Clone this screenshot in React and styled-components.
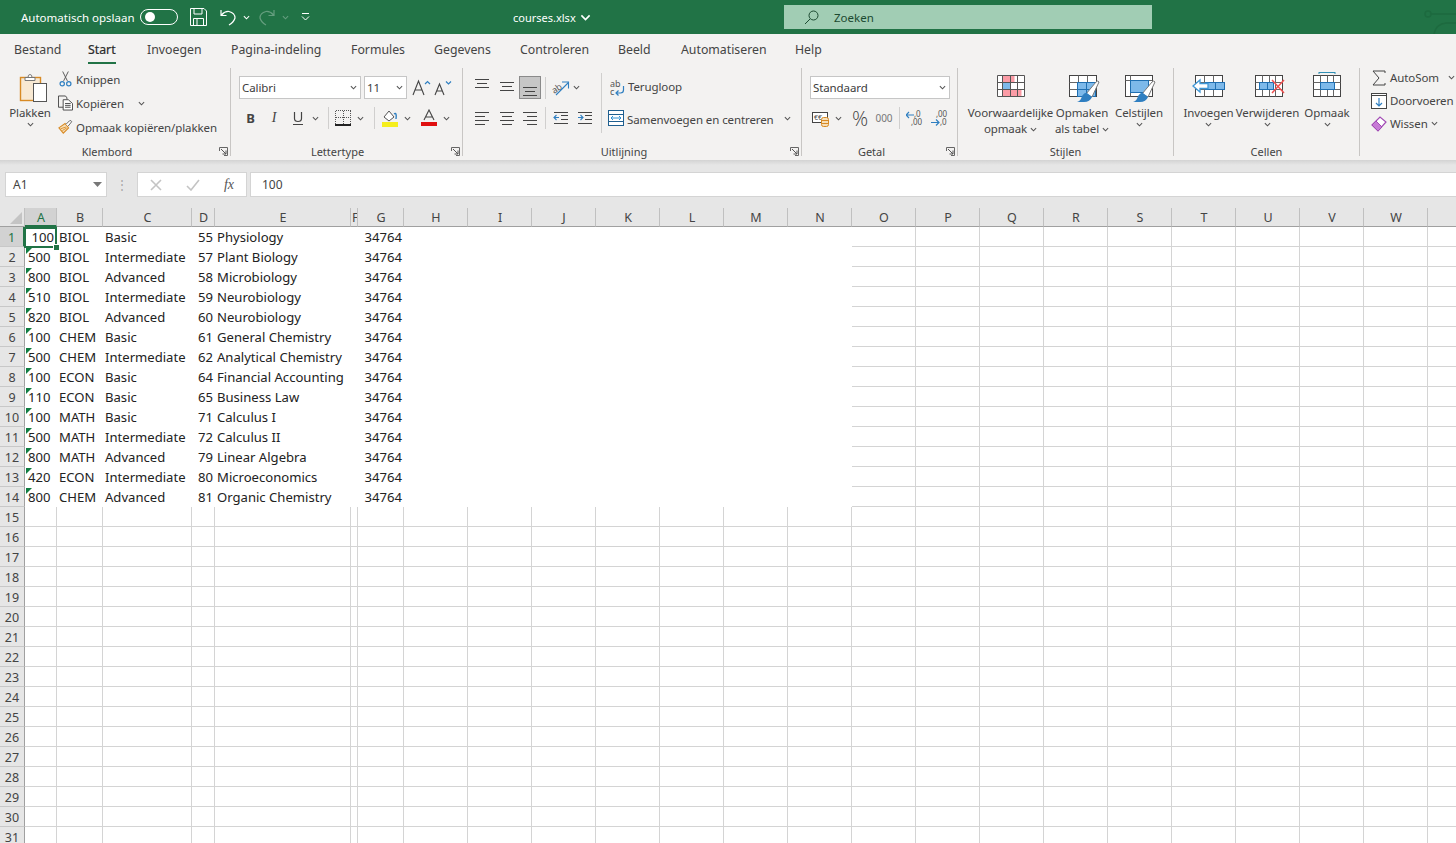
import React from 'react';
import styled, { createGlobalStyle } from 'styled-components';

const UI_FONT = `"Noto Sans", "Open Sans", sans-serif`;

const GlobalStyle = createGlobalStyle`
  html, body { margin: 0; padding: 0; height: 100%; overflow: hidden; background: #fff; }
  body { font-family: ${UI_FONT}; }
`;

const Page = styled.div`
  width: 1456px;
  height: 843px;
  overflow: hidden;
  display: flex;
  flex-direction: column;
`;

/* ---------- title bar ---------- */

const TitleBar = styled.header`
  height: 34px;
  flex: none;
  background: #217346;
  color: #fff;
  display: flex;
  align-items: center;
  padding-left: 21px;
  font-size: 11.5px;
  overflow: hidden;
`;

const Slot = styled.div`
  width: ${p => p.$w}px;
  flex: none;
  display: flex;
  align-items: center;
  white-space: nowrap;
  font-size: ${p => p.$fs ? `${p.$fs}px` : 'inherit'};
  opacity: ${p => p.$dim ? 0.3 : 1};
`;

const Toggle = styled.div`
  width: 38px;
  height: 16px;
  box-sizing: border-box;
  border: 1px solid #fff;
  border-radius: 8px;
  padding: 2px 0 0 4px;

  &::before {
    content: '';
    display: block;
    width: 10px;
    height: 10px;
    border-radius: 50%;
    background: #fff;
  }
`;

const SearchBox = styled.div`
  width: 368px;
  height: 24px;
  flex: none;
  background: #a1cdb4;
  color: #1c4a31;
  display: flex;
  align-items: center;
  gap: 15px;
  padding-left: 20px;
  box-sizing: border-box;
`;

const TitleArt = styled.svg`
  margin-left: auto;
  flex: none;
`;

/* ---------- tabs ---------- */

const TabBar = styled.nav`
  height: 34px;
  flex: none;
  background: #f3f2f1;
  display: flex;
  padding-left: 14px;
  box-sizing: border-box;
`;

const Tab = styled.div`
  width: ${p => p.$w}px;
  flex: none;
  font-size: 12.3px;
  line-height: 31px;
  color: ${p => p.$active ? '#2b2b2b' : '#444'};
  -webkit-text-stroke: ${p => p.$active ? '0.2px #2b2b2b' : '0'};

  span {
    display: inline-block;
    height: 28px;
    border-bottom: ${p => p.$active ? '2px solid #217346' : '0'};
  }
`;

/* ---------- ribbon ---------- */

const Ribbon = styled.div`
  height: 92px;
  flex: none;
  background: #f3f2f1;
  display: flex;
  color: #444;
  font-size: 11.5px;
  letter-spacing: -0.1px;
`;

const Group = styled.section`
  position: relative;
  width: ${p => p.$w ? `${p.$w}px` : 'auto'};
  flex: ${p => p.$w ? 'none' : 1};
  box-sizing: border-box;
  display: flex;
  flex-direction: column;
  height: 92px;
  padding-bottom: 1px;
  overflow: hidden;

  &::after {
    content: '';
    display: ${p => p.$w ? 'block' : 'none'};
    position: absolute;
    right: 0;
    top: 0;
    width: 1px;
    height: 88px;
    background: #c8c6c4;
  }
`;

const GroupBody = styled.div`
  flex: 1;
  min-height: 0;
  display: flex;
  padding: ${p => p.$top || 0}px 0 0 ${p => p.$left || 0}px;
  flex-direction: ${p => p.$col ? 'column' : 'row'};
`;

const GroupFooter = styled.footer`
  height: 16px;
  flex: none;
  display: grid;
  grid-template-columns: 1fr auto 1fr;
  align-items: center;
  font-size: 11px;
  letter-spacing: 0;
  color: #444;
  padding-right: 3px;
`;

const FooterLabel = styled.span`
  grid-column: 2;
  transform: translateX(${p => p.$shift || 0}px);
`;

const Launcher = styled.span`
  grid-column: 3;
  justify-self: end;
  display: flex;
`;

const BigBtn = styled.div`
  width: ${p => p.$w}px;
  flex: none;
  display: flex;
  flex-direction: column;
  align-items: center;
  padding-top: 4px;
  line-height: 16px;
  white-space: nowrap;
  text-align: center;

  svg.big { height: 33px; display: block; flex: none; }
`;

const SmallStack = styled.div`
  display: flex;
  flex-direction: column;
  margin-left: ${p => p.$ml || 0}px;
  margin-top: ${p => p.$mt || 0}px;
`;

const SmallRow = styled.div`
  height: ${p => p.$h || 24}px;
  flex: none;
  display: flex;
  align-items: center;
  gap: 3px;
  white-space: nowrap;
`;

const ToolRow = styled.div`
  height: ${p => p.$h || 23}px;
  flex: none;
  display: flex;
  align-items: center;
  margin-top: ${p => p.$mt || 0}px;
`;

const Tool = styled.div`
  width: ${p => p.$w}px;
  height: ${p => p.$h ? `${p.$h}px` : 'auto'};
  box-sizing: border-box;
  flex: none;
  display: flex;
  align-items: center;
  justify-content: center;
  white-space: nowrap;
  background: ${p => p.$on ? '#c6c6c6' : 'transparent'};
  border: ${p => p.$on ? '1px solid #8a8a8a' : '0'};
`;

const Percent = styled(Tool)`
  font-family: "Open Sans", sans-serif;
  font-weight: 300;
  font-size: 20px;
  letter-spacing: 0;
`;

const Thousands = styled(Tool)`
  font-size: 10px;
  color: #777;
`;

const BoldMark = styled.b`
  font-size: 13px;
`;

const ItalicMark = styled.i`
  font-size: 14px;
  font-family: "Liberation Serif", serif;
`;

const ToolSep = styled.div`
  width: 1px;
  height: ${p => p.$h || 22}px;
  background: #d0cfce;
  flex: none;
  margin-left: ${p => p.$l || 0}px;
  margin-right: ${p => p.$r || 0}px;
`;

const Spacer = styled.span`
  width: ${p => p.$w}px;
  flex: none;
  display: block;
`;

const Select = styled.div`
  width: ${p => p.$w}px;
  height: 23px;
  box-sizing: border-box;
  flex: none;
  margin-right: ${p => p.$mr || 0}px;
  background: #fff;
  border: 1px solid #c6c6c6;
  display: flex;
  align-items: center;
  justify-content: space-between;
  padding: 0 3px 1px 2px;
  color: #3c3c3c;
`;

const WithText = styled.div`
  display: flex;
  align-items: center;
  gap: ${p => p.$gap || 3}px;
  white-space: nowrap;

  span {
    padding-top: ${p => p.$low ? 2 : 0}px;
    padding-bottom: ${p => p.$high ? 2 : 0}px;
  }
`;

const ColumnStack = styled.div`
  display: flex;
  flex-direction: column;
`;

/* ---------- formula bar ---------- */

const FormulaArea = styled.div`
  height: 48px;
  flex: none;
  box-sizing: border-box;
  background: linear-gradient(#d3d3d3 0, #e6e6e6 5px);
  padding: 12px 0 0 5px;
  display: flex;
  align-items: flex-start;
  color: #444;
  font-size: 12px;
`;

const FieldBox = styled.div`
  width: ${p => p.$w ? `${p.$w}px` : 'auto'};
  flex: ${p => p.$w ? 'none' : 1};
  height: 25px;
  box-sizing: border-box;
  background: #fff;
  border: 1px solid #d4d4d4;
  display: flex;
  align-items: center;
  margin-left: ${p => p.$ml || 0}px;
  padding-left: ${p => p.$pl || 0}px;
  padding-right: ${p => p.$pr || 0}px;
  justify-content: ${p => p.$between ? 'space-between' : 'flex-start'};
  border-right: ${p => p.$open ? 0 : '1px solid #d4d4d4'};
`;

const FxMark = styled.i`
  font-family: "Liberation Serif", serif;
  font-size: 14px;
  color: #555;
`;

const Grip = styled.div`
  width: 30px;
  flex: none;
  height: 25px;
  display: flex;
  align-items: center;
  justify-content: center;
  color: #a6a6a6;
`;

/* ---------- sheet ---------- */

const COLS = [
  ['A', 32], ['B', 46], ['C', 89], ['D', 23], ['E', 136], ['F', 7], ['G', 46],
  ['H', 64], ['I', 64], ['J', 64], ['K', 64], ['L', 64], ['M', 64], ['N', 64],
  ['O', 64], ['P', 64], ['Q', 64], ['R', 64], ['S', 64], ['T', 64], ['U', 64],
  ['V', 64], ['W', 64], ['X', 64],
];

const Sheet = styled.div`
  flex: 1;
  overflow: hidden;
  background: #fff;
  display: grid;
  grid-template-columns: 25px ${COLS.map(c => c[1] + 'px').join(' ')};
  grid-auto-rows: 20px;
  grid-template-rows: 19px;
  font-family: "Noto Sans", sans-serif;
  font-size: 13.1px;
  color: #222;
`;

const Corner = styled.div`
  position: relative;
  background: #e6e6e6;
  border-bottom: 1px solid #a0a0a0;
  border-right: 1px solid #c0c0c0;
  box-sizing: border-box;

  &::after {
    content: '';
    position: absolute;
    right: 2px;
    bottom: 2px;
    border-left: 12px solid transparent;
    border-bottom: 12px solid #c4c4c4;
  }
`;

const ColHead = styled.div`
  box-sizing: border-box;
  background: ${p => p.$on ? '#d2d2d2' : '#e6e6e6'};
  color: ${p => p.$on ? '#217346' : '#444'};
  border-right: 1px solid #c0c0c0;
  border-bottom: ${p => p.$on ? '2px solid #217346' : '1px solid #a0a0a0'};
  font-size: 12.5px;
  line-height: 19px;
  padding-left: 1px;
  text-align: center;
  overflow: hidden;
`;

const RowHead = styled.div`
  box-sizing: border-box;
  background: ${p => p.$on ? '#d2d2d2' : '#e6e6e6'};
  color: ${p => p.$on ? '#217346' : '#444'};
  border-right: ${p => p.$on ? '2px solid #217346' : '1px solid #a0a0a0'};
  border-bottom: 1px solid #c8c8c8;
  font-size: 12.5px;
  line-height: 21px;
  text-align: center;
`;

const Cell = styled.div`
  position: relative;
  box-sizing: border-box;
  padding: 0 2px 0 ${p => p.$first ? 3 : 2}px;
  line-height: 20px;
  white-space: nowrap;
  text-align: ${p => p.$right ? 'right' : 'left'};
  border-right: ${p => p.$plain ? 0 : '1px solid #d4d4d4'};
  border-bottom: ${p => p.$plain ? 0 : '1px solid #d4d4d4'};

  ${p => p.$flag && `
    &::before {
      content: '';
      position: absolute;
      left: 1px;
      top: 1px;
      border-top: 6px solid #107c41;
      border-right: 6px solid transparent;
    }
  `}

  ${p => p.$selected && `
    box-shadow: 0 0 0 2px #217346 inset;
    margin: 0 0 -1px -1px;
    padding-right: 3px;

    &::after {
      content: '';
      position: absolute;
      right: -3px;
      bottom: -3px;
      width: 5px;
      height: 5px;
      background: #217346;
      border: 1px solid #fff;
      z-index: 2;
    }
  `}
`;

const ROWS = [
  ['100', 'BIOL', 'Basic', '55', 'Physiology'],
  ['500', 'BIOL', 'Intermediate', '57', 'Plant Biology'],
  ['800', 'BIOL', 'Advanced', '58', 'Microbiology'],
  ['510', 'BIOL', 'Intermediate', '59', 'Neurobiology'],
  ['820', 'BIOL', 'Advanced', '60', 'Neurobiology'],
  ['100', 'CHEM', 'Basic', '61', 'General Chemistry'],
  ['500', 'CHEM', 'Intermediate', '62', 'Analytical Chemistry'],
  ['100', 'ECON', 'Basic', '64', 'Financial Accounting'],
  ['110', 'ECON', 'Basic', '65', 'Business Law'],
  ['100', 'MATH', 'Basic', '71', 'Calculus I'],
  ['500', 'MATH', 'Intermediate', '72', 'Calculus II'],
  ['800', 'MATH', 'Advanced', '79', 'Linear Algebra'],
  ['420', 'ECON', 'Intermediate', '80', 'Microeconomics'],
  ['800', 'CHEM', 'Advanced', '81', 'Organic Chemistry'],
];

/* ---------- icons ---------- */

const Chev = ({ c = '#555', s = 7 }) => (
  <svg width={s} height={s} viewBox="0 0 8 8" style={{ flex: 'none' }}>
    <path d="M1 2.5 L4 5.5 L7 2.5" fill="none" stroke={c} strokeWidth="1.2" />
  </svg>
);

const LauncherIcon = () => (
  <svg width="9" height="9" viewBox="0 0 9 9">
    <path d="M.5 4V.5H8.5V8.5H5" fill="none" stroke="#666" />
    <path d="M2 2 L7 7 M7 3.5V7H3.5" fill="none" stroke="#555" />
  </svg>
);

const Lines = ({ rows, w = 16 }) => (
  <svg width={w} height="17" viewBox="0 0 16 17">
    {rows.map(([x1, x2, y], i) => (
      <path key={i} d={`M${x1} ${y}.5H${x2}`} stroke="#444" />
    ))}
  </svg>
);

const TableGrid = ({ x = 0, y = 3, w = 28, h = 22, cols = 3, rows = 3 }) => {
  const parts = [];
  for (let i = 1; i < cols; i++) parts.push(`M${x + Math.round((w * i) / cols)} ${y}v${h}`);
  for (let i = 1; i < rows; i++) parts.push(`M${x} ${y + Math.round((h * i) / rows)}h${w}`);
  return (
    <g>
      <rect x={x + 0.5} y={y + 0.5} width={w} height={h} fill="#fff" stroke="#444" />
      <path d={parts.join('')} stroke="#666" fill="none" transform="translate(.5 .5)" />
    </g>
  );
};

const Brush = ({ x = 0 }) => (
  <g transform={`translate(${x} 0)`}>
    <path d="M21 22 L31 10 Q33 8 34 10 L27 25 Z" fill="#fff" stroke="#777" />
    <path d="M12 30 Q16 29 17 24 Q20 20 22 21 L27 25 Q25 30 19 30 Z" fill="#2f7fc1" />
  </g>
);

const PasteIcon = () => (
  <svg className="big" width="34" height="33" viewBox="0 0 34 33">
    <rect x="7.5" y="5.5" width="20" height="23" fill="#f8e9d3" stroke="#d88a24" strokeWidth="1.4" />
    <path d="M12 5.5h10v3H12z M15 5.5q0-3 2-3t2 3" fill="#fff" stroke="#777" />
    <rect x="20.5" y="11.5" width="13" height="18" fill="#fff" stroke="#555" />
  </svg>
);

const Scissors = () => (
  <svg width="16" height="18" viewBox="0 0 16 18">
    <path d="M5 1 L10 11 M11 1 L6 11" stroke="#555" fill="none" />
    <circle cx="4.5" cy="14" r="2.3" fill="none" stroke="#2f7fc1" strokeWidth="1.3" />
    <circle cx="11.5" cy="14" r="2.3" fill="none" stroke="#2f7fc1" strokeWidth="1.3" />
  </svg>
);

const CopyIcon = () => (
  <svg width="16" height="16" viewBox="0 0 16 16">
    <path d="M6.5 12.5H.5V.5H8L9.5 2.5V4" fill="none" stroke="#444" />
    <path d="M5.5 4.5H11L15.5 8.5V15.5H5.5Z M7.5 8.5h6 M7.5 10.5h6 M7.5 12.5h6" fill="#fff" stroke="#444" />
  </svg>
);

const PainterIcon = () => (
  <svg width="17" height="16" viewBox="0 0 17 16">
    <path d="M1 9 L8 4 L12 9 L6 15 Z" fill="#f6dfb9" stroke="#d88a24" strokeWidth="1.2" />
    <path d="M3 10 L9 8 M5 12 L10 9" stroke="#d88a24" />
    <path d="M9 5 L13 1 Q15 0 15.5 2 L11.5 7" fill="#fff" stroke="#555" />
  </svg>
);

const GrowFont = ({ up, size }) => (
  <svg width="19" height="18" viewBox="0 0 19 18">
    <path d={size === 'big' ? 'M1 16 L6.5 2 L12 16 M3 11h7' : 'M2 16 L6.5 5 L11 16 M3.6 12h6'} fill="none" stroke="#444" strokeWidth="1.1" />
    <path d={up ? 'M13 5 L15.5 2.5 L18 5' : 'M13 2.5 L15.5 5 L18 2.5'} fill="none" stroke="#2f7fc1" strokeWidth="1.2" />
  </svg>
);

const Underlined = () => (
  <svg width="12" height="16" viewBox="0 0 12 16">
    <path d="M2.5 2v6.5q0 3 3.5 3t3.5-3V2" fill="none" stroke="#444" strokeWidth="1.2" />
    <path d="M1 14.5h10" stroke="#444" />
  </svg>
);

const BorderIcon = () => (
  <svg width="16" height="16" viewBox="0 0 16 16" shapeRendering="crispEdges">
    <path d="M.5 .5h15M.5 .5v14M15.5 .5v14M8.5 .5v14M.5 7.5h15" stroke="#555" strokeDasharray="1 1" fill="none" />
    <path d="M0 15h16" stroke="#222" strokeWidth="1.5" />
  </svg>
);

const FillIcon = () => (
  <svg width="16" height="18" viewBox="0 0 16 18">
    <path d="M2 8 L7 2 L12 8 L7 12 Z" fill="#fff" stroke="#555" />
    <path d="M12 5 Q15 3 14 10" fill="none" stroke="#2f7fc1" strokeWidth="1.4" />
    <rect x="0" y="13" width="16" height="5" fill="#f5ee1d" />
  </svg>
);

const FontColorIcon = () => (
  <svg width="16" height="18" viewBox="0 0 16 18">
    <path d="M3 11 L8 1 L13 11 M4.6 8h6.8" fill="none" stroke="#444" strokeWidth="1.1" />
    <rect x="0" y="13" width="16" height="4" fill="#e01010" />
  </svg>
);

const OrientIcon = () => (
  <svg width="18" height="18" viewBox="0 0 18 18">
    <text x="0" y="12" fontSize="9" fill="#555" transform="rotate(-35 6 10)" fontFamily="Noto Sans, sans-serif">ab</text>
    <path d="M4 16 L16 4 M10 3h6.5v6.5" fill="none" stroke="#2f7fc1" strokeWidth="1.1" />
  </svg>
);

const WrapIcon = () => (
  <svg width="15" height="18" viewBox="0 0 15 18">
    <text x="0" y="8" fontSize="9" fill="#555" fontFamily="Noto Sans, sans-serif">ab</text>
    <text x="0" y="16" fontSize="9" fill="#555" fontFamily="Noto Sans, sans-serif">c</text>
    <path d="M13.5 7v4q0 3-3 3H6 M8.5 11.5 L6 14 L8.5 16.5" fill="none" stroke="#2f7fc1" strokeWidth="1.2" />
  </svg>
);

const IndentIcon = ({ inward }) => (
  <svg width="16" height="14" viewBox="0 0 16 14">
    <path d="M1 1.5h14M8 4.5h7M8 8.5h7M1 12.5h14" stroke="#444" />
    <path d={inward ? 'M1 6.5h5M3.5 4 L6 6.5 L3.5 9' : 'M1 6.5h5M3.5 4 L1 6.5 L3.5 9'} fill="none" stroke="#2f7fc1" strokeWidth="1.1" />
  </svg>
);

const MergeIcon = () => (
  <svg width="16" height="16" viewBox="0 0 16 16">
    <rect x=".5" y=".5" width="15" height="15" fill="#fff" stroke="#1f5f8f" />
    <path d="M1 4.5h14M1 11.5h14" stroke="#1f5f8f" />
    <path d="M3 8h10M5 6 L3 8 L5 10 M11 6 L13 8 L11 10" fill="none" stroke="#2f8fd1" />
  </svg>
);

const CurrencyIcon = () => (
  <svg width="18" height="17" viewBox="0 0 18 17">
    <rect x=".5" y="2.5" width="15" height="10" fill="#fff" stroke="#444" />
    <text x="2" y="10" fontSize="7" fill="#444" fontFamily="Noto Sans, sans-serif">€€</text>
    <rect x="9.5" y="7.5" width="7" height="9" rx="2" fill="#f6dfb9" stroke="#d88a24" />
    <path d="M9.5 10.5h7M9.5 13.5h7" stroke="#d88a24" />
  </svg>
);

const DecimalIcon = ({ more }) => (
  <svg width="18" height="17" viewBox="0 0 18 17">
    <text x={more ? 5 : 8} y="7" fontSize="8" fill="#555" fontFamily="Noto Sans, sans-serif">{more ? ',00' : ',0'}</text>
    <text x={more ? 9 : 5} y="15" fontSize="8" fill="#555" fontFamily="Noto Sans, sans-serif">{more ? ',0' : ',00'}</text>
    {more
      ? <path d="M0 12.5h8M5 9.5 L8 12.5 L5 15.5" fill="none" stroke="#2f7fc1" strokeWidth="1.2" />
      : <path d="M0 5h8M3 2 L0 5 L3 8" fill="none" stroke="#2f7fc1" strokeWidth="1.2" />}
  </svg>
);

const CondIcon = () => (
  <svg className="big" width="32" height="33" viewBox="0 0 32 33">
    <rect x="2.5" y="3.5" width="27" height="21" fill="#fff" />
    <rect x="7.5" y="3.5" width="12" height="7" fill="#fb9ca6" />
    <rect x="7.5" y="10.5" width="8" height="7" fill="#7db9ea" />
    <rect x="7.5" y="17.5" width="19" height="7" fill="#fb9ca6" />
    <path d="M2.5 3.5h27v21h-27z M7.5 3v21 M15.5 3v21 M22.5 3v21 M2 10.5h27 M2 17.5h27" fill="none" stroke="#555" />
  </svg>
);

const TableStyleIcon = () => (
  <svg className="big" width="36" height="33" viewBox="0 0 36 33">
    <TableGrid x={5} y={3} w={27} h={21} cols={3} />
    <rect x="13.5" y="10.5" width="18" height="14" fill="#7db9ea" stroke="#1f6fb2" />
    <path d="M22.5 10v14M13 17.5h18" stroke="#1f6fb2" />
    <Brush x={1} />
  </svg>
);

const CellStyleIcon = () => (
  <svg className="big" width="36" height="33" viewBox="0 0 36 33">
    <rect x="4.5" y="3.5" width="27" height="21" fill="#fff" stroke="#444" />
    <path d="M4.5 8.5h27M9.5 3.5v21" stroke="#666" />
    <rect x="9.5" y="8.5" width="18" height="12" fill="#7db9ea" stroke="#1f6fb2" />
    <Brush x={0} />
  </svg>
);

const InsertIcon = () => (
  <svg className="big" width="36" height="33" viewBox="0 0 36 33">
    <TableGrid x={4} y={3} w={27} h={21} cols={3} />
    <rect x="14.5" y="10.5" width="19" height="7" fill="#7db9ea" stroke="#1f6fb2" />
    <path d="M24.5 10v8" stroke="#1f6fb2" />
    <path d="M2 14 L9 8 V11.5 H17 V16.5 H9 V20 Z" fill="#fff" stroke="#3f97d6" strokeWidth="1.3" />
  </svg>
);

const DeleteIcon = () => (
  <svg className="big" width="36" height="33" viewBox="0 0 36 33">
    <TableGrid x={5} y={3} w={27} h={21} cols={4} />
    <rect x="9.5" y="10.5" width="14" height="7" fill="#7db9ea" stroke="#1f6fb2" />
    <path d="M17.5 10v8" stroke="#1f6fb2" />
    <path d="M22 8 L34 21 M34 8 L22 21" stroke="#f05050" strokeWidth="1.5" />
  </svg>
);

const FormatIcon = () => (
  <svg className="big" width="32" height="33" viewBox="0 0 32 33">
    <path d="M8 .5h16M8 0v2M24 0v2" stroke="#2f8fb5" />
    <TableGrid x={2} y={3} w={27} h={21} cols={4} />
    <rect x="9.5" y="10.5" width="14" height="7" fill="#7db9ea" stroke="#1f6fb2" />
  </svg>
);

const Sigma = () => (
  <svg width="14" height="16" viewBox="0 0 14 16">
    <path d="M13 3V1H1L7 8L1 15H13V13" fill="none" stroke="#444" />
  </svg>
);

const FillDown = () => (
  <svg width="16" height="16" viewBox="0 0 16 16">
    <rect x=".5" y=".5" width="15" height="15" fill="#fff" stroke="#444" />
    <path d="M1 2.5h14" stroke="#444" />
    <path d="M8 5v8M5 10 L8 13 L11 10" fill="none" stroke="#2f7fc1" strokeWidth="1.2" />
  </svg>
);

const Eraser = () => (
  <svg width="16" height="16" viewBox="0 0 16 16">
    <path d="M1 9 L9 1 L15 6 L7 15 Z" fill="#fff" stroke="#a24cb5" strokeWidth="1.2" />
    <path d="M1 9 L5 5 L11 11 L7 15 Z" fill="#c77bd6" stroke="#a24cb5" />
  </svg>
);

const Footer = ({ label, launcher, shift }) => (
  <GroupFooter>
    <FooterLabel $shift={shift}>{label}</FooterLabel>
    {launcher && <Launcher><LauncherIcon /></Launcher>}
  </GroupFooter>
);

const TABS = [
  ['Bestand', 74], ['Start', 59], ['Invoegen', 84], ['Pagina-indeling', 120],
  ['Formules', 83], ['Gegevens', 86], ['Controleren', 98], ['Beeld', 63],
  ['Automatiseren', 114], ['Help', 50],
];

const App = () => (
  <Page>
    <GlobalStyle />
    <TitleBar>
      <Slot $w={119}>Automatisch opslaan</Slot>
      <Slot $w={50}><Toggle /></Slot>
      <Slot $w={30}>
        <svg width="17" height="18" viewBox="0 0 17 18">
          <path d="M.5 .5H14L16.5 3V17.5H.5Z M4 .5V6H12V.5 M3.5 17.5V10.5H13.5V17.5 M7 10.5V17.5" fill="none" stroke="#fff" />
        </svg>
      </Slot>
      <Slot $w={39}>
        <svg width="16" height="17" viewBox="0 0 16 17">
          <path d="M1 1V6.5H6.5 M1.5 6Q5 2 9 2.5Q15 4 15 9Q14 13 9 16" fill="none" stroke="#fff" strokeWidth="1.2" />
        </svg>
        <Spacer $w={7} />
        <Chev c="#fff" />
      </Slot>
      <Slot $w={42} $dim>
        <svg width="16" height="17" viewBox="0 0 16 17">
          <path d="M15 1V6.5H9.5 M14.5 6Q11 2 7 2.5Q1 4 1 9Q2 13 7 16" fill="none" stroke="#fff" strokeWidth="1.2" />
        </svg>
        <Spacer $w={7} />
        <Chev c="#fff" />
      </Slot>
      <Slot $w={212}>
        <svg width="9" height="9" viewBox="0 0 9 9">
          <path d="M1 .5h7M1 3.5 L4.5 7 L8 3.5" fill="none" stroke="#fff" />
        </svg>
      </Slot>
      <Slot $w={271} $fs={11}>
        <span>courses.xlsx</span>
        <Spacer $w={4} />
        <Chev c="#fff" s={11} />
      </Slot>
      <SearchBox>
        <svg width="15" height="15" viewBox="0 0 15 15">
          <circle cx="9.5" cy="5.5" r="4.5" fill="none" stroke="#1c4a31" />
          <path d="M6 9 L1 14" stroke="#1c4a31" />
        </svg>
        <span>Zoeken</span>
      </SearchBox>
      <TitleArt width="32" height="34" viewBox="0 0 32 34">
        <circle cx="4" cy="14" r="3" fill="none" stroke="#1d6a3f" strokeWidth="1.5" />
        <path d="M7 14H32 M10 34Q12 24 22 23H32" fill="none" stroke="#1d6a3f" strokeWidth="1.5" />
      </TitleArt>
    </TitleBar>

    <TabBar>
      {TABS.map(([name, w]) => (
        <Tab key={name} $w={w} $active={name === 'Start'}><span>{name}</span></Tab>
      ))}
    </TabBar>

    <Ribbon>
      <Group $w={231}>
        <GroupBody $left={4}>
          <BigBtn $w={52}>
            <PasteIcon />
            <span>Plakken</span>
            <Chev />
          </BigBtn>
          <SmallStack $ml={2} $mt={-1}>
            <SmallRow><Tool $w={15}><Scissors /></Tool><span>Knippen</span></SmallRow>
            <SmallRow><Tool $w={15}><CopyIcon /></Tool><span>Kopiëren</span><Spacer $w={8} /><Chev /></SmallRow>
            <SmallRow><Tool $w={15}><PainterIcon /></Tool><span>Opmaak kopiëren/plakken</span></SmallRow>
          </SmallStack>
        </GroupBody>
        <Footer label="Klembord" launcher shift={-7} />
      </Group>

      <Group $w={232}>
        <GroupBody $col $left={8} $top={8}>
          <ToolRow>
            <Select $w={122} $mr={3}>Calibri<Chev /></Select>
            <Select $w={43} $mr={4}>11<Chev /></Select>
            <Tool $w={20}><GrowFont up size="big" /></Tool>
            <Tool $w={22}><GrowFont size="small" /></Tool>
          </ToolRow>
          <ToolRow $mt={8} $h={22}>
            <Tool $w={23}><BoldMark>B</BoldMark></Tool>
            <Tool $w={24}><ItalicMark>I</ItalicMark></Tool>
            <Tool $w={24}><Underlined /></Tool>
            <Tool $w={11}><Chev /></Tool>
            <ToolSep $l={7} $r={6} />
            <Tool $w={16}><BorderIcon /></Tool>
            <Tool $w={18}><Chev /></Tool>
            <ToolSep $l={5} $r={7} />
            <Tool $w={16}><FillIcon /></Tool>
            <Tool $w={18}><Chev /></Tool>
            <Tool $w={26}><FontColorIcon /></Tool>
            <Tool $w={8}><Chev /></Tool>
          </ToolRow>
        </GroupBody>
        <Footer label="Lettertype" launcher shift={-8} />
      </Group>

      <Group $w={339}>
        <GroupBody $left={7} $top={8}>
          <ColumnStack>
            <ToolRow>
              <Tool $w={24}><Lines rows={[[1, 15, 0], [3, 13, 4], [1, 15, 8]]} /></Tool>
              <Tool $w={25}><Lines rows={[[1, 15, 3], [3, 13, 7], [1, 15, 11]]} /></Tool>
              <Tool $w={22} $h={23} $on><Lines rows={[[1, 15, 8], [3, 13, 12], [1, 15, 16]]} /></Tool>
              <ToolSep $l={4} $r={4} />
              <Tool $w={22}><OrientIcon /></Tool>
              <Tool $w={8}><Chev /></Tool>
              <Spacer $w={21} />
              <ToolSep $h={30} />
              <Spacer $w={8} />
              <WithText $high><WrapIcon /><span>Terugloop</span></WithText>
            </ToolRow>
            <ToolRow $mt={8} $h={22}>
              <Tool $w={24}><Lines rows={[[1, 15, 2], [1, 11, 6], [1, 15, 10], [1, 11, 14]]} /></Tool>
              <Tool $w={25}><Lines rows={[[1, 15, 2], [3, 13, 6], [1, 15, 10], [3, 13, 14]]} /></Tool>
              <Tool $w={22}><Lines rows={[[1, 15, 2], [5, 15, 6], [1, 15, 10], [5, 15, 14]]} /></Tool>
              <ToolSep $l={4} />
              <Tool $w={30}><IndentIcon /></Tool>
              <Tool $w={18}><IndentIcon inward /></Tool>
              <Spacer $w={7} />
              <ToolSep $h={30} />
              <Spacer $w={6} />
              <WithText $low><MergeIcon /><span>Samenvoegen en centreren</span></WithText>
              <Spacer $w={10} />
              <Chev />
            </ToolRow>
          </ColumnStack>
        </GroupBody>
        <Footer label="Uitlijning" launcher shift={-7} />
      </Group>

      <Group $w={156}>
        <GroupBody $col $left={8} $top={8}>
          <ToolRow>
            <Select $w={140}>Standaard<Chev /></Select>
          </ToolRow>
          <ToolRow $mt={8} $h={22}>
            <Tool $w={22}><CurrencyIcon /></Tool>
            <Tool $w={12}><Chev /></Tool>
            <Percent $w={32}>%</Percent>
            <Thousands $w={16}>000</Thousands>
            <Spacer $w={7} />
            <ToolSep />
            <Tool $w={30}><DecimalIcon /></Tool>
            <Tool $w={20}><DecimalIcon more /></Tool>
          </ToolRow>
        </GroupBody>
        <Footer label="Getal" launcher shift={-7} />
      </Group>

      <Group $w={216}>
        <GroupBody $left={9}>
          <BigBtn $w={87}>
            <CondIcon />
            <span>Voorwaardelijke</span>
            <WithText><span>opmaak</span><Chev /></WithText>
          </BigBtn>
          <BigBtn $w={56}>
            <TableStyleIcon />
            <span>Opmaken</span>
            <WithText><span>als tabel</span><Chev /></WithText>
          </BigBtn>
          <BigBtn $w={58}>
            <CellStyleIcon />
            <span>Celstijlen</span>
            <Chev />
          </BigBtn>
        </GroupBody>
        <Footer label="Stijlen" shift={1} />
      </Group>

      <Group $w={186}>
        <GroupBody $left={8}>
          <BigBtn $w={53}>
            <InsertIcon />
            <span>Invoegen</span>
            <Chev />
          </BigBtn>
          <BigBtn $w={65}>
            <DeleteIcon />
            <span>Verwijderen</span>
            <Chev />
          </BigBtn>
          <BigBtn $w={54}>
            <FormatIcon />
            <span>Opmaak</span>
            <Chev />
          </BigBtn>
        </GroupBody>
        <Footer label="Cellen" shift={1} />
      </Group>

      <Group>
        <GroupBody $left={11}>
          <SmallStack $mt={-2}>
            <SmallRow $h={23}><Tool $w={16}><Sigma /></Tool><span>AutoSom</span><Spacer $w={3} /><Chev /></SmallRow>
            <SmallRow $h={23}><Tool $w={16}><FillDown /></Tool><span>Doorvoeren</span></SmallRow>
            <SmallRow $h={23}><Tool $w={16}><Eraser /></Tool><span>Wissen</span><Chev /></SmallRow>
          </SmallStack>
        </GroupBody>
      </Group>
    </Ribbon>

    <FormulaArea>
      <FieldBox $w={102} $pl={7} $pr={4} $between>
        A1
        <svg width="9" height="5" viewBox="0 0 9 5"><path d="M0 0h9L4.5 5Z" fill="#777" /></svg>
      </FieldBox>
      <Grip>⋮</Grip>
      <FieldBox $w={110} $pl={12} $pr={12} $between>
        <svg width="12" height="12" viewBox="0 0 12 12"><path d="M1 1 L11 11 M11 1 L1 11" stroke="#c4c4c4" strokeWidth="1.6" /></svg>
        <svg width="14" height="12" viewBox="0 0 14 12"><path d="M1 7 L5 11 L13 1" fill="none" stroke="#c4c4c4" strokeWidth="1.6" /></svg>
        <FxMark>fx</FxMark>
      </FieldBox>
      <FieldBox $ml={3} $pl={11} $open>100</FieldBox>
    </FormulaArea>

    <Sheet>
      <Corner />
      {COLS.map(([name], i) => <ColHead key={name} $on={i === 0}>{name}</ColHead>)}
      {Array.from({ length: 32 }, (_, r) => {
        const row = ROWS[r];
        return (
          <React.Fragment key={r}>
            <RowHead $on={r === 0}>{r + 1}</RowHead>
            {COLS.map(([name], c) => {
              let text = '';
              if (row) {
                if (c < 5) text = row[c];
                if (c === 6) text = '34764';
              }
              const plain = row && c < 14;
              return (
                <Cell
                  key={name}
                  $plain={plain}
                  $first={c === 0}
                  $right={c === 3 || c === 6 || (c === 0 && r === 0)}
                  $flag={c === 0 && r > 0 && r < 14}
                  $selected={c === 0 && r === 0}
                >
                  {text}
                </Cell>
              );
            })}
          </React.Fragment>
        );
      })}
    </Sheet>
  </Page>
);

export default App;
